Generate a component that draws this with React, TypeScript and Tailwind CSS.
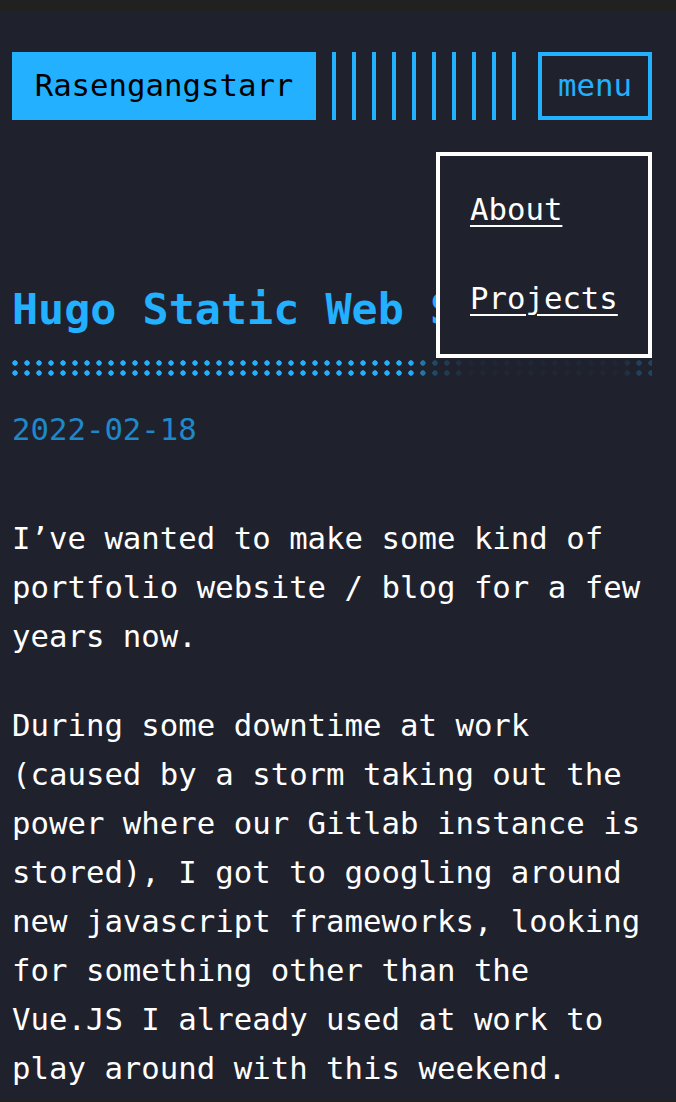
import React from 'react';

const mono = "font-['DejaVu_Sans_Mono','Liberation_Mono',monospace]";

const Header: React.FC = () => {
  const bars = Array.from({ length: 10 });
  return (
    <div className="relative flex items-stretch h-[68px]">
      <div className="w-[304px] bg-[#22b0ff] flex items-center justify-center text-black text-[30.7px] leading-none">
        Rasengangstarr
      </div>
      <div className="flex gap-4 ml-4">
        {bars.map((_, i) => (
          <div key={i} className="w-1 h-full bg-[#22b0ff]" />
        ))}
      </div>
      <button className="ml-auto w-[114px] border-4 border-[#22b0ff] flex items-center justify-center text-[#22b0ff] text-[30.7px] leading-none">
        menu
      </button>
      {/* open menu */}
      <div className="absolute right-0 top-[100px] w-[216px] h-[206px] border-4 border-white bg-[#1f222d] pl-[30px] pt-[29px] flex flex-col gap-[40px] z-10">
        <a className="text-white text-[30.7px] leading-[49px] underline decoration-2 underline-offset-[5px]">About</a>
        <a className="text-white text-[30.7px] leading-[49px] underline decoration-2 underline-offset-[5px]">Projects</a>
      </div>
    </div>
  );
};

const paragraphs = [
  'I\u2019ve wanted to make some kind of portfolio website / blog for a few years now.',
  'During some downtime at work (caused by a storm taking out the power where our Gitlab instance is stored), I got to googling around new javascript frameworks, looking for something other than the Vue.JS I already used at work to play around with this weekend.',
];

export default function App() {
  return (
    <div className={`h-screen overflow-hidden bg-[#212121] flex flex-col ${mono}`}>
      <main className="flex-1 mt-3 mb-[2px] bg-[#1f222d] pl-3 pr-6 pt-10 overflow-hidden">
        <Header />
        <h1 className="mt-[163px] text-[#22b0ff] font-bold text-[43.4px] leading-[52px] whitespace-nowrap">
          Hugo Static Web Site
        </h1>
        <div className="mt-[25px] h-4 w-full bg-[radial-gradient(circle_at_3px_3px,#22b0ff_2.4px,transparent_3px)] bg-[length:12px_10px] [mask-image:linear-gradient(to_right,black_398px,rgba(0,0,0,0.3)_420px,rgba(0,0,0,0.04)_455px,rgba(0,0,0,0.04)_610px,rgba(0,0,0,0.25)_628px)]" />
        <div className="mt-[29px] text-[#1f88c9] text-[30.7px] leading-[49px]">2022-02-18</div>
        <div className="mt-[60px] flex flex-col gap-[40px] text-white text-[30.7px] leading-[49px]">
          {paragraphs.map((p, i) => (
            <p key={i}>{p}</p>
          ))}
        </div>
      </main>
    </div>
  );
}
